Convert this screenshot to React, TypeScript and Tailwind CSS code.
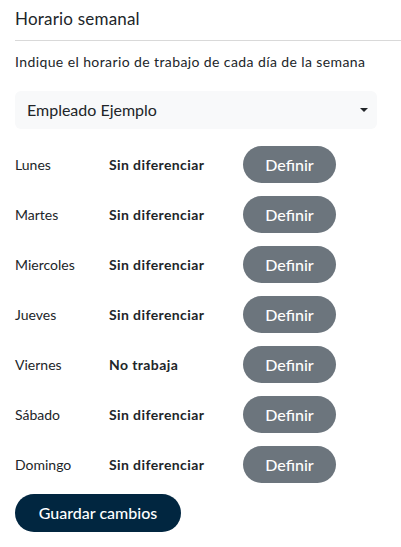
import React from "react";

const days: [string, string][] = [
  ["Lunes", "Sin diferenciar"],
  ["Martes", "Sin diferenciar"],
  ["Miercoles", "Sin diferenciar"],
  ["Jueves", "Sin diferenciar"],
  ["Viernes", "No trabaja"],
  ["Sábado", "Sin diferenciar"],
  ["Domingo", "Sin diferenciar"],
];

export default function App() {
  return (
    <div className="w-[401px] h-[547px] bg-white text-[#212529] font-['Lato',sans-serif] pl-[15px] pt-[6px]">
      <h1 className="text-[17px] leading-[26px] font-normal tracking-[0.2px]">Horario semanal</h1>
      <div className="mt-[8px] h-px bg-[#d9d9d9]" />
      <p className="mt-[11px] text-[14px] leading-[20px] tracking-[0.4px]">Indique el horario de trabajo de cada día de la semana</p>
      <div className="mt-[19px] w-[362px] h-[38px] rounded-[6px] bg-[#f8f9fa] flex items-center justify-between pl-[12px] pr-[7px]">
        <span className="text-[16px]">Empleado Ejemplo</span>
        <svg width="10" height="6" viewBox="0 0 10 6" className="mr-[1px]">
          <path d="M1 1 L9 1 L5 5 Z" fill="#212529" />
        </svg>
      </div>
      <div className="mt-[17px] flex flex-col gap-[13px]">
        {days.map(([d, s]) => (
          <div key={d} className="flex items-center h-[37px]">
            <span className="w-[94px] text-[14px]">{d}</span>
            <span className="w-[134px] text-[14px] font-bold tracking-[0.4px]">{s}</span>
            <button className="w-[93px] h-[37px] rounded-full bg-[#6c757d] text-white text-[16px] font-medium">Definir</button>
          </div>
        ))}
      </div>
      <button className="mt-[11px] w-[166px] h-[38px] rounded-full bg-[#012640] text-white text-[16px] font-medium">Guardar cambios</button>
    </div>
  );
}
